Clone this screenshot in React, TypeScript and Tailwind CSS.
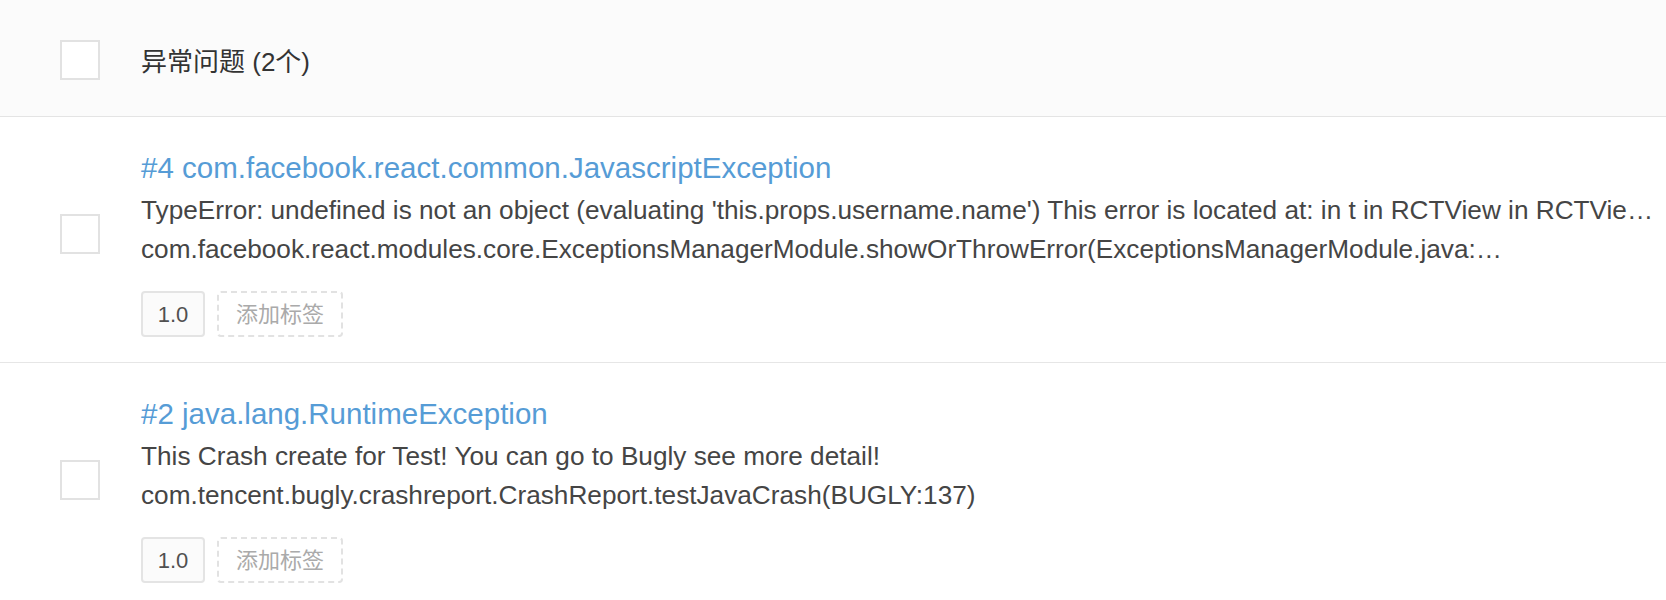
import React from "react";

const font = { fontFamily: '"Liberation Sans", "Noto Sans CJK SC", Arial, sans-serif' };

type Item = {
  title: string;
  line1: string;
  line2: string;
  version: string;
};

const items: Item[] = [
  {
    title: "#4 com.facebook.react.common.JavascriptException",
    line1:
      "TypeError: undefined is not an object (evaluating 'this.props.username.name') This error is located at: in t in RCTView in RCTVie…",
    line2:
      "com.facebook.react.modules.core.ExceptionsManagerModule.showOrThrowError(ExceptionsManagerModule.java:…",
    version: "1.0",
  },
  {
    title: "#2 java.lang.RuntimeException",
    line1: "This Crash create for Test! You can go to Bugly see more detail!",
    line2: "com.tencent.bugly.crashreport.CrashReport.testJavaCrash(BUGLY:137)",
    version: "1.0",
  },
];

function Checkbox() {
  return <div className="w-[40px] h-[40px] border-2 border-[#e2e2e2] bg-white" />;
}

function Row({ item }: { item: Item }) {
  return (
    <div className="flex border-b border-[#e6e6e6] bg-white">
      <div className="w-[141px] shrink-0 pl-[60px] pt-[97px]">
        <Checkbox />
      </div>
      <div className="min-w-0 flex-1 pr-[12px] pt-[31px] pb-[25px]">
        <div className="text-[29.5px] leading-[40px] text-[#569cd6] whitespace-nowrap">
          {item.title}
        </div>
        <div className="mt-[3px] text-[26.2px] leading-[39px] text-[#454545] whitespace-nowrap">
          <div>{item.line1}</div>
          <div>{item.line2}</div>
        </div>
        <div className="mt-[22px] flex gap-[12px]">
          <div className="w-[64px] h-[46px] flex items-center justify-center border-2 border-[#e4e4e4] rounded-[4px] bg-[#fbfbfb] text-[22px] text-[#505050]">
            {item.version}
          </div>
          <div className="w-[126px] h-[46px] flex items-center justify-center border-2 border-dashed border-[#e2e2e2] rounded-[4px] bg-white text-[22px] text-[#aaaaaa]">
            添加标签
          </div>
        </div>
      </div>
    </div>
  );
}

export default function App() {
  return (
    <div className="w-full min-h-[600px] bg-white" style={font}>
      <div className="flex items-center h-[117px] border-b border-[#e4e4e4] bg-[#fbfbfb]">
        <div className="w-[141px] shrink-0 pl-[60px] mt-[4px]">
          <Checkbox />
        </div>
        <div className="mt-[8px] text-[26px] text-[#333]">异常问题 (2个)</div>
      </div>
      {items.map((it, i) => (
        <Row key={i} item={it} />
      ))}
    </div>
  );
}
